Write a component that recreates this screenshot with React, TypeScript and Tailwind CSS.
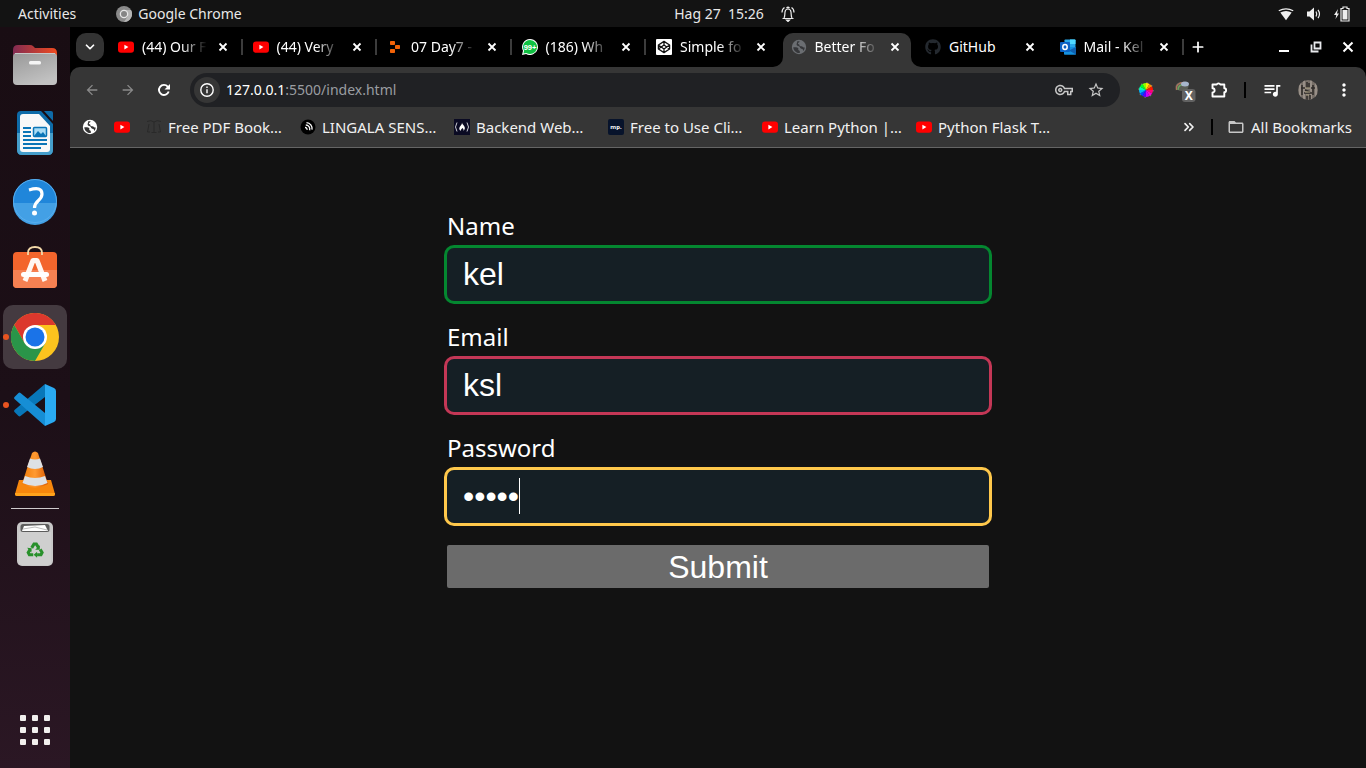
import React, { useState } from "react";
import {
  MdArrowBack,
  MdArrowForward,
  MdMoreVert,
  MdOutlineVpnKey,
  MdQueueMusic,
  MdStarOutline,
  MdFolderOpen,
} from "react-icons/md";
import { FaGithub } from "react-icons/fa";
import { ChevronDown, ChevronsRight, Plus } from "lucide-react";

function YouTube() {
  return (
    <svg viewBox="0 0 16 16" className="size-4 shrink-0" aria-hidden="true">
      <rect x="0" y="2.4" width="16" height="11.4" rx="3" fill="#f00" />
      <path d="M6.4 5.7v4.7l4-2.35z" fill="#fff" />
    </svg>
  );
}

function Cross() {
  return (
    <svg viewBox="0 0 16 16" className="size-4 shrink-0" aria-hidden="true">
      <path d="m4.500 4.500 7 7m0-7-7 7" fill="none" stroke="#fff" strokeWidth="1.800" />
    </svg>
  );
}

function Globe({ color, land }: { color: string; land: string }) {
  return (
    <svg viewBox="0 0 16 16" className="size-4 shrink-0" aria-hidden="true">
      <circle cx="8" cy="8" r="7.2" fill={color} />
      <path
        d="M2.3 8.2c2 .1 3.700-.1 4.800.9.700.8-.1 1.300.2 1.900.4.700 1.400.3 1.500 1.200v1.800c-1.600.3-3.900-.5-5-2-.900-1.200-1.500-2.500-1.500-3.800zM8.600 2.200c-.1 1.300-1.500 1.100-1.700 2.200-.1.900 1.600.6 1.500 1.600-.1 1.100 1 1.300 2.100 1.300 1 0 1.300 1.100 2.300 1.200h1c-.1 1.300-.6 2.500-1.500 3.400-.5-.5-.1-1.700-1.100-1.900-1.300-.2-2.300-.7-2.400-1.900C8.700 6.900 6.200 7 5.700 5.900 5.200 4.700 6.700 3.500 6 2.500c.8-.3 1.700-.4 2.600-.3z"
        fill={land}
      />
    </svg>
  );
}

function Replit() {
  return (
    <svg viewBox="0 0 16 16" className="size-4 shrink-0" aria-hidden="true">
      <g fill="#f26207">
        <rect x="3" y="2" width="5" height="4" rx="0.8" />
        <rect x="8" y="6" width="5" height="4" rx="0.8" />
        <rect x="3" y="10" width="5" height="4" rx="0.8" />
      </g>
    </svg>
  );
}

function WhatsApp() {
  return (
    <svg viewBox="0 0 16 16" className="size-4 shrink-0" aria-hidden="true">
      <path d="M8 0a8 8 0 1 1-3.900 15L0 16l1-4.200A8 8 0 0 1 8 0z" fill="#fff" />
      <path d="M8 1a7 7 0 1 1-3.700 12.900L1.400 14.600l.7-2.900A7 7 0 0 1 8 1z" fill="#10c143" />
      <text x="8" y="10.700" textAnchor="middle" fontSize="7.500" fontWeight="700" fontFamily="Liberation Sans, sans-serif" fill="#fff">
        99+
      </text>
    </svg>
  );
}

function CodePen() {
  return (
    <svg viewBox="0 0 16 16" className="size-4 shrink-0" aria-hidden="true">
      <rect width="16" height="16" rx="1" fill="#fff" />
      <path
        d="M8 2.400 13.600 6v4L8 13.600 2.400 10V6zM8 2.400V6M8 10v3.600M2.400 6 8 10l5.600-4M2.400 10 8 6l5.600 4"
        fill="none"
        stroke="#111"
        strokeWidth="1.300"
        strokeLinejoin="round"
      />
    </svg>
  );
}

function Outlook() {
  return (
    <svg viewBox="0 0 16 16" className="size-4 shrink-0" aria-hidden="true">
      <rect x="4.500" y="0.500" width="11" height="9" rx="0.800" fill="#28a8ea" />
      <path d="M10 .5h4.700q.8 0 .8.8V5H10z" fill="#50d9ff" />
      <path d="M4.500 5H10v5H4.500z" fill="#0364b8" />
      <path d="M4 8l12 0v7q0 .8-.8.8H4.800q-.8 0-.8-.8z" fill="#1490df" />
      <path d="M16 8v7.500L9 11.500z" fill="#0f5fae" />
      <rect x="0" y="3" width="10" height="10" rx="0.900" fill="#0a62c4" />
      <ellipse cx="5" cy="8" rx="2.200" ry="2.500" fill="none" stroke="#fff" strokeWidth="1.500" />
    </svg>
  );
}

type Tab = { title: string; icon: React.ReactNode; active?: boolean; divider?: boolean };

const tabs: Tab[] = [
  { title: "(44) Our F", icon: <YouTube />, divider: true },
  { title: "(44) Very", icon: <YouTube />, divider: true },
  { title: "07 Day7 -", icon: <Replit />, divider: true },
  { title: "(186) Wh", icon: <WhatsApp />, divider: true },
  { title: "Simple fo", icon: <CodePen /> },
  { title: "Better Fo", icon: <Globe color="#6b6e72" land="#36373a" />, active: true },
  { title: "GitHub", icon: <FaGithub className="size-4 shrink-0 text-[#24292f]" aria-hidden="true" /> },
  { title: "Mail - Kel", icon: <Outlook />, divider: true },
];

function TabFoot({ side }: { side: "left" | "right" }) {
  return (
    <svg
      viewBox="0 0 10 10"
      aria-hidden="true"
      className={side === "left" ? "absolute bottom-0 -left-2.5 size-2.5" : "absolute bottom-0 -right-2.5 size-2.5"}
    >
      <path d={side === "left" ? "M10 0v10H0A10 10 0 0 0 10 0z" : "M0 0v10h10A10 10 0 0 1 0 0z"} fill="#363636" />
    </svg>
  );
}

function TabStrip() {
  return (
    <div className="flex h-10 items-start bg-black pt-1.5 pl-1.5 text-white">
      <button aria-label="Search tabs" className="flex size-7 shrink-0 items-center justify-center rounded-[10px] bg-[#333]">
        <ChevronDown className="size-3.5" strokeWidth={3} />
      </button>
      <div role="tablist" className="ml-1.5 flex max-w-[1076px] flex-1 self-stretch">
        {tabs.map((tab, i) => (
          <div key={i} className="flex min-w-0 flex-1 items-start">
            <div
              className={
                tab.active
                  ? "relative flex h-full min-w-0 flex-1 items-start rounded-t-[10px] bg-[#363636] px-2"
                  : "relative flex h-full min-w-0 flex-1 items-start px-2"
              }
            >
              {tab.active && <TabFoot side="left" />}
              {tab.active && <TabFoot side="right" />}
              <button role="tab" aria-selected={!!tab.active} className="flex h-7 min-w-0 flex-1 items-center gap-2">
                {tab.icon}
                <span
                  className={
                    tab.title === "GitHub"
                      ? "min-w-0 flex-1 text-left text-sm whitespace-nowrap"
                      : "min-w-0 flex-1 text-left text-sm whitespace-nowrap [mask-image:linear-gradient(to_right,black_60%,transparent)]"
                  }
                >
                  {tab.title}
                </span>
              </button>
              <button aria-label={"Close " + tab.title} className="ml-2 flex h-7 w-4 shrink-0 items-center justify-center">
                <Cross />
              </button>
            </div>
            <span className="flex h-7 w-1.5 shrink-0 items-center justify-center">
              {tab.divider && <span className="h-4 w-0.5 bg-[#3c3c3c]" />}
            </span>
          </div>
        ))}
      </div>
      <button aria-label="New tab" className="flex h-7 w-6 shrink-0 items-center justify-center">
        <Plus className="size-4" strokeWidth={2.600} />
      </button>
      <div className="ml-auto flex h-7 shrink-0 items-center gap-4 pr-2.5">
        <button aria-label="Minimize">
          <svg viewBox="0 0 16 16" className="size-4"><path d="M3 11h10v2H3z" fill="#fff" /></svg>
        </button>
        <button aria-label="Restore">
          <svg viewBox="0 0 16 16" className="size-4">
            <path d="M6.500 3.500h6v6h-6zM3.500 5.500v7h7" fill="none" stroke="#e8eaed" strokeWidth="1.800" />
            <path d="M8.500 5.500h2v2h-2z" fill="#111" />
          </svg>
        </button>
        <button aria-label="Close window">
          <svg viewBox="0 0 16 16" className="size-4">
            <path d="m3.500 3.500 9 9m0-9-9 9" fill="none" stroke="#fff" strokeWidth="2" />
          </svg>
        </button>
      </div>
    </div>
  );
}

function ColorWheel() {
  return (
    <svg viewBox="0 0 16 16" className="size-4" aria-hidden="true">
      <circle cx="8" cy="8" r="7" fill="none" stroke="#777" strokeWidth="1.500" strokeDasharray="1.500 4" />
      <path d="M8 8 8 1a7 7 0 0 1 3.500.94z" fill="#ffe600" />
      <path d="M8 8 11.500 1.940A7 7 0 0 1 14.060 4.500z" fill="#ff8a00" />
      <path d="M8 8 14.060 4.500A7 7 0 0 1 15 8z" fill="#ff1500" />
      <path d="M8 8h7a7 7 0 0 1-.94 3.500z" fill="#ff0078" />
      <path d="M8 8l6.060 3.500a7 7 0 0 1-2.560 2.560z" fill="#ff00d4" />
      <path d="M8 8l3.500 6.060A7 7 0 0 1 8 15z" fill="#c800ff" />
      <path d="M8 8v7a7 7 0 0 1-3.500-.94z" fill="#5a00ff" />
      <path d="M8 8l-3.500 6.060a7 7 0 0 1-2.560-2.560z" fill="#0048ff" />
      <path d="M8 8l-6.060 3.500A7 7 0 0 1 1 8z" fill="#00b7ff" />
      <path d="M8 8H1a7 7 0 0 1 .94-3.500z" fill="#00ffb0" />
      <path d="M8 8 1.940 4.500A7 7 0 0 1 4.500 1.940z" fill="#00ff28" />
      <path d="M8 8 4.500 1.940A7 7 0 0 1 8 1z" fill="#8dff00" />
    </svg>
  );
}

function Toolbar() {
  return (
    <div className="flex h-[46px] items-center pr-3 pl-3.5">
      <div className="flex shrink-0 gap-5 pr-[18px]">
        <button aria-label="Back" className="text-[#8a8a8a]"><MdArrowBack className="size-4" /></button>
        <button aria-label="Forward" className="text-[#8a8a8a]"><MdArrowForward className="size-4" /></button>
        <button aria-label="Reload">
          <svg viewBox="0 0 16 16" className="size-4">
            <path d="M12.700 9.500A5 5 0 1 1 11.700 4.600L13 6" fill="none" stroke="#fff" strokeWidth="1.900" />
            <path d="M14 2v5.500H8.500z" fill="#fff" />
          </svg>
        </button>
      </div>
      <div className="flex h-[34px] min-w-0 flex-1 items-center rounded-full bg-[#202124] pr-[15px] pl-1">
        <button aria-label="Site information" className="flex size-6.5 shrink-0 items-center justify-center rounded-full bg-[#363636]">
          <svg viewBox="0 0 16 16" className="size-4">
            <circle cx="8" cy="8" r="6.200" fill="none" stroke="#fff" strokeWidth="1.400" />
            <path d="M7.300 7.200h1.400v4H7.300zM7.300 4.500h1.400V6H7.300z" fill="#fff" />
          </svg>
        </button>
        <a href="#" className="ml-1.5 min-w-0 flex-1 truncate text-sm text-[#9a9da1]">
          <span className="text-white">127.0.0.1</span>:5500/index.html
        </a>
        <button aria-label="Manage passwords" className="text-[#c7c7c7]"><MdOutlineVpnKey className="size-[18px]" /></button>
        <button aria-label="Bookmark this page" className="ml-3.5 text-[#c7c7c7]"><MdStarOutline className="size-[18px]" /></button>
      </div>
      <div className="ml-[18px] flex shrink-0 items-center text-white">
        <button aria-label="Color picker" className="flex"><ColorWheel /></button>
        <button aria-label="Blocked extension" className="ml-5 flex">
          <svg viewBox="0 0 24 24" className="size-6">
            <ellipse cx="8" cy="8.500" rx="6.500" ry="4.500" fill="#5a5d55" />
            <path d="M2.500 12C1.500 7 5 4.500 10 4.500" fill="none" stroke="#ad735e" strokeWidth="1.300" />
            <path d="M4 12c0-4 3-5.500 6-5.500" fill="none" stroke="#6ca55c" strokeWidth="1.300" />
            <ellipse cx="11" cy="6" rx="4" ry="2.500" fill="#a7b5cb" />
            <rect x="8" y="11" width="13.500" height="13" rx="3" fill="#626262" />
            <text x="14.800" y="22" textAnchor="middle" fontSize="12" fontWeight="700" fontFamily="Noto Sans, sans-serif" fill="#fff">X</text>
          </svg>
        </button>
        <button aria-label="Extensions" className="ml-3 flex">
          <svg viewBox="0 0 18 18" className="size-[18px]">
            <path d="M2.500 3.500h4.200a1.900 1.600 0 0 1 3.600 0h4v3.800a1.800 1.900 0 0 1 0 3.800v4.400H2.500v-4a2 2 0 0 0 0-4.200z" fill="none" stroke="#fff" strokeWidth="1.900" strokeLinejoin="round" />
          </svg>
        </button>
        <span className="ml-4 h-4 w-0.5 bg-black" />
        <button aria-label="Media controls" className="ml-4 flex"><MdQueueMusic className="size-5" /></button>
        <button aria-label="Profile" className="ml-4 flex">
          <svg viewBox="0 0 20 20" className="size-5">
            <defs><clipPath id="avatar"><circle cx="10" cy="10" r="10" /></clipPath></defs>
            <g clipPath="url(#avatar)">
              <rect width="20" height="20" fill="#776f68" />
              <path d="M2 0v20M6 0v20M13 0v20M18 0v20" stroke="#aaa098" strokeWidth="1.300" />
              <path d="M4 5v10M9 2v6M11 3v5M15 5v10M7 10l5 2M6 13h8M9 15v5M12 15v5M3 8h4M13 8h4" stroke="#302d2a" strokeWidth="1.600" />
              <path d="M7 8h5M7 12h5M8 15h3" stroke="#b4a98b" />
            </g>
          </svg>
        </button>
        <button aria-label="Menu" className="ml-4 flex"><MdMoreVert className="size-5" /></button>
      </div>
    </div>
  );
}

const bookmarks: { title: string; icon: React.ReactNode }[] = [
  {
    title: "Free PDF Book…",
    icon: (
      <svg viewBox="0 0 16 16" className="size-4 shrink-0" aria-hidden="true">
        <path d="M1 2.500Q5 .5 8 3q3-2.500 7-.5M8 3v10M5.500 13.500h5M3 5l-1.500 8H4M13 5l1.500 8H12" fill="none" stroke="#292929" />
      </svg>
    ),
  },
  {
    title: "LINGALA SENS…",
    icon: (
      <svg viewBox="0 0 16 16" className="size-4 shrink-0" aria-hidden="true">
        <circle cx="8" cy="8" r="7.500" fill="#000" />
        <path d="M6.500 3.600a6 6 0 0 1 5.500 7M5.800 6a4 4 0 0 1 3.800 5.200M5 8.500a2 2 0 0 1 2 2.300" fill="none" stroke="#fff" strokeWidth="1.300" />
      </svg>
    ),
  },
  {
    title: "Backend Web…",
    icon: (
      <svg viewBox="0 0 16 16" className="size-4 shrink-0" aria-hidden="true">
        <rect width="16" height="16" fill="#0a0a23" />
        <path d="M3 3.500q-3 4.500 0 9M13 3.500q3 4.500 0 9" fill="none" stroke="#c9c9d2" />
        <path d="M8 3.500c.4 2.600 3.400 3.400 2.800 6.200-.3 1-.8 1.500-1.500 2 .6-1.600-.2-2.200-1-2.800-.5 1.200-1.700 1.300-1.300 2.900-1.700-.7-2.200-2.200-1.300-3.900C6.500 6.500 8.100 5.600 8 3.500z" fill="#fff" />
      </svg>
    ),
  },
  {
    title: "Free to Use Cli…",
    icon: (
      <svg viewBox="0 0 16 16" className="size-4 shrink-0" aria-hidden="true">
        <rect width="16" height="16" rx="2" fill="#07132b" />
        <text x="8" y="9.500" textAnchor="middle" fontSize="6" fontWeight="700" fontFamily="Noto Sans, sans-serif" fill="#fff">mp.</text>
      </svg>
    ),
  },
  { title: "Learn Python |…", icon: <YouTube /> },
  { title: "Python Flask T…", icon: <YouTube /> },
];

function BookmarkBar() {
  return (
    <nav aria-label="Bookmarks" className="flex h-[35px] items-center border-b border-[#656565] pr-3.5 pb-1.5 pl-3 text-[15px] text-[#f1f1f1]">
      <a href="#" aria-label="Globe" className="mr-4"><Globe color="#fff" land="#363636" /></a>
      <a href="#" aria-label="YouTube" className="mr-4"><YouTube /></a>
      {bookmarks.map((b) => (
        <a key={b.title} href="#" className="flex w-[154px] shrink-0 items-center gap-1.5 whitespace-nowrap">
          {b.icon}
          {b.title}
        </a>
      ))}
      <div className="ml-auto flex items-center">
        <button aria-label="More bookmarks"><ChevronsRight className="size-4" strokeWidth={2.500} /></button>
        <span className="mx-3.5 h-4 w-0.5 bg-black" />
        <button className="flex items-center gap-1.5 whitespace-nowrap">
          <MdFolderOpen className="size-[18px] text-[#c7c7c7]" />
          All Bookmarks
        </button>
      </div>
    </nav>
  );
}

function FilesIcon() {
  return (
    <svg viewBox="0 0 48 48" className="size-12">
      <defs>
        <linearGradient id="folder" x1="0" x2="1"><stop stopColor="#822b52" /><stop offset="1" stopColor="#f04b20" /></linearGradient>
        <linearGradient id="front" x1="0" y1="0" x2="0.500" y2="1"><stop stopColor="#989898" /><stop offset="1" stopColor="#c1c1c1" /></linearGradient>
      </defs>
      <path d="M2 9q0-5 5-5h12q2 0 3 1l2 2h17q5 0 5 5v10H2z" fill="url(#folder)" />
      <rect x="2" y="12" width="44" height="32" rx="4" fill="url(#front)" />
      <path d="M4 12.500h40" stroke="#c8c8c8" />
      <rect x="18" y="20" width="12" height="3.500" rx="1.500" fill="#f5f5f5" />
    </svg>
  );
}

function WriterIcon() {
  return (
    <svg viewBox="0 0 48 48" className="size-12">
      <path d="M10 2h20l12 13v26q0 5-5 5H11q-5 0-5-5V6q0-4 4-4z" fill="#0e6ba8" />
      <path d="M6 24h36v17q0 5-5 5H11q-5 0-5-5z" fill="#459ecb" />
      <path d="M33 2h7q2 0 2 2v8z" fill="#0e6ba8" />
      <path d="M12 5h16l11 12v23q0 3-3 3H12q-3 0-3-3V8q0-3 3-3z" fill="#f8f8f8" />
      <path d="M12 19h8M12 23h8M12 27h8M12 31h24M12 35h24M12 39h18" stroke="#0b75b7" strokeWidth="2" />
      <rect x="22.500" y="18.500" width="13" height="9" rx="1" fill="#a9dcf5" stroke="#0b75b7" strokeWidth="1.500" />
      <path d="m23 27 4-5 3 3 2-2 3 4z" fill="#0b75b7" />
    </svg>
  );
}

function HelpIcon() {
  return (
    <svg viewBox="0 0 48 48" className="size-12">
      <circle cx="24" cy="24" r="22" fill="#2086da" />
      <path d="M2 26a22 22 0 0 0 44 0z" fill="#43a0e5" />
      <circle cx="24" cy="24" r="21.500" fill="none" stroke="#57aded" />
      <path d="M18 13q13-4 13 4c0 7-7.500 6-7.500 14" fill="none" stroke="#fff" strokeWidth="3.200" />
      <circle cx="23.500" cy="36" r="2.500" fill="#fff" />
    </svg>
  );
}

function SoftwareIcon() {
  return (
    <svg viewBox="0 0 48 48" className="size-12">
      <rect x="2" y="7" width="44" height="36" rx="4" fill="#f3652c" />
      <path d="M2 25h44v14q0 4-4 4H6q-4 0-4-4z" fill="#f68152" />
      <path d="M17 10V8q0-6 7-6t7 6v2" fill="none" stroke="#f3d9a9" strokeWidth="1.800" />
      <path d="m14 36 8-20.500h4L34 36" fill="none" stroke="#fff7f1" strokeWidth="5" strokeLinejoin="round" />
      <rect x="10" y="27" width="28" height="5" rx="2.500" fill="#fff" />
    </svg>
  );
}

function ChromeIcon() {
  return (
    <svg viewBox="0 0 48 48" className="size-12">
      <circle cx="24" cy="24" r="24" fill="#fcc31e" />
      <path d="M24 12h20.800A24 24 0 0 0 3.200 12L13.600 30z" fill="#dc382d" />
      <path d="M3.200 12A24 24 0 0 0 24 48l10.400-18-10.400 6-10.400-6z" fill="#2a9549" />
      <circle cx="24" cy="24" r="12" fill="#fff" />
      <circle cx="24" cy="24" r="9.500" fill="#1a73e8" />
    </svg>
  );
}

function CodeIcon() {
  return (
    <svg viewBox="0 0 48 48" className="size-12">
      <path d="M34 3 3.500 29q-1 1 0 2l4 4q1 .8 2 0L34 16z" fill="#0877b9" />
      <path d="M34 45 3.500 18q-1-1 0-2l4-4q1-.8 2 0L34 32z" fill="#168ed5" />
      <path d="M34 3 43 7q2 1 2 3v28q0 2-2 3l-9 4z" fill="#2aaaf2" />
    </svg>
  );
}

function VlcIcon() {
  return (
    <svg viewBox="0 0 48 48" className="size-12">
      <defs><linearGradient id="cone"><stop stopColor="#f07b05" /><stop offset="0.500" stopColor="#ff9a31" /><stop offset="1" stopColor="#d85800" /></linearGradient></defs>
      <path d="M8 31h32l4 14q.3 2-2 2H6q-2 0-2-2z" fill="#f7870c" />
      <path d="M4 44h40v1q0 2-2 2H6q-2 0-2-2z" fill="#ffa21b" />
      <path d="M21 4q3-3 6 0l10 31q-13 7-26 0z" fill="url(#cone)" />
      <path d="m19 9.500q5 2 10 0l3 8.500q-8 4-16 0zM14 27q10 4 20 0l2.500 7q-12 6-25 0z" fill="#dde1e4" />
    </svg>
  );
}

function TrashIcon() {
  return (
    <svg viewBox="0 0 48 48" className="size-12">
      <rect x="6" y="2" width="36" height="44" rx="5" fill="#c8c8c8" />
      <rect x="9.500" y="4" width="29" height="8" rx="2.500" fill="#5c5c5c" />
      <path d="m11 11 2-5 21-1 3 6z" fill="#fff" />
      <path d="m12 9 12-2 12 3" fill="none" stroke="#bbb" />
      <path d="M8 12h32v30q0 3-3 3H11q-3 0-3-3z" fill="#cfcfcf" />
      <g transform="translate(5.300 6.300) scale(0.770)">
        <path d="m20 28 3-5h3l3 5M31 30l2.500 4-1.500 3h-5M22 37h-5l-1.500-3 2.500-4" fill="none" stroke="#28902b" strokeWidth="4" />
        <path d="m30.500 24.500v6h-6zM27 33v8l-4.500-4zM14 28l6 .5-.5 5.500z" fill="#28902b" />
      </g>
    </svg>
  );
}

const apps = [
  { name: "Files", icon: <FilesIcon /> },
  { name: "LibreOffice Writer", icon: <WriterIcon /> },
  { name: "Help", icon: <HelpIcon /> },
  { name: "Ubuntu Software", icon: <SoftwareIcon /> },
  { name: "Google Chrome", icon: <ChromeIcon />, running: true, focused: true },
  { name: "Visual Studio Code", icon: <CodeIcon />, running: true },
  { name: "VLC media player", icon: <VlcIcon /> },
];

function Dock() {
  return (
    <aside aria-label="Dock" className="flex w-[70px] shrink-0 flex-col items-center bg-linear-to-b from-[#190d13] via-[#1c0f17] to-[#2b1724] py-1.5">
      <div className="flex flex-col gap-1">
        {apps.map((app) => (
          <button
            key={app.name}
            aria-label={app.name}
            className={
              app.focused
                ? "relative flex size-16 items-center justify-center rounded-[10px] bg-[#443a40]"
                : "relative flex size-16 items-center justify-center"
            }
          >
            {app.running && <span className="absolute top-[29px] left-0 size-1.5 rounded-full bg-[#e95420]" />}
            {app.icon}
          </button>
        ))}
      </div>
      <span className="my-[3px] h-px w-12 bg-[#cfcbcd]" />
      <button aria-label="Trash" className="flex size-16 items-center justify-center"><TrashIcon /></button>
      <button aria-label="Show applications" className="mt-auto flex size-16 items-center justify-center">
        <span className="grid grid-cols-3 gap-1.5">
          {Array.from({ length: 9 }, (_, i) => (
            <span key={i} className="size-1.5 rounded-[1px] bg-[#f2f0ee]" />
          ))}
        </span>
      </button>
    </aside>
  );
}

function TopBar() {
  return (
    <header className="grid h-[27px] shrink-0 grid-cols-[1fr_auto_1fr] items-center bg-[#131313] text-sm text-[#e8e8e8]">
      <div className="flex items-center pl-[18px]">
        <button>Activities</button>
        <button className="ml-10 flex items-center gap-1.5">
          <svg viewBox="0 0 16 16" className="size-4" aria-hidden="true">
            <circle cx="8" cy="8" r="8" fill="#8a8a8a" />
            <path d="M8 4h7A8 8 0 0 1 8 16l4-6z" fill="#b5b5b5" />
            <circle cx="8" cy="8" r="4.300" fill="#e6e6e6" />
            <circle cx="8" cy="8" r="3" fill="#858585" />
          </svg>
          Google Chrome
        </button>
      </div>
      <button className="ml-[104px] flex items-center gap-4">
        <span className="whitespace-pre">Hag 27  15:26</span>
        <svg viewBox="0 0 16 16" className="size-4" fill="none" stroke="#ececec" strokeWidth="1.200">
          <path d="M2.500 12.500h11M4 12c1-1.500.7-3.500 1-6 .3-2.300 1.300-3 3-3s2.700.7 3 3c.3 2.500 0 4.500 1 6M2 6.500Q2 3 4.500 1.500M14 6.500Q14 3 11.500 1.500M6.500 2Q8 .5 9.500 2" />
          <path d="M6.500 14h3l-1.500 1.500z" fill="#ececec" />
        </svg>
      </button>
      <div className="flex items-center justify-end gap-3 pr-4">
        <svg viewBox="0 0 16 16" className="size-4" aria-label="Wi-Fi">
          <path d="M.8 4.800Q8 .8 15.200 4.800" fill="none" stroke="#eee" strokeWidth="1.300" />
          <path d="M2.300 6.500Q8 3.500 13.700 6.500L8 14.200z" fill="#eee" />
        </svg>
        <svg viewBox="0 0 16 16" className="size-4" aria-label="Volume">
          <path d="M1 5.500h2.500L8 1.500v13l-4.500-4H1z" fill="#eee" />
          <path d="M10 5.500q1.500 2.500 0 5M12 3.800q3 4.200 0 8.400" fill="none" stroke="#eee" strokeWidth="1.200" />
        </svg>
        <svg viewBox="0 0 16 16" className="size-4" aria-label="Battery charging">
          <path d="M4 3 0 9h2.300L1.500 13 5 7.500H3z" fill="#eee" />
          <path d="M7 2.500h2V1h4v1.500h2V15H7z" fill="none" stroke="#eee" strokeWidth="1.200" />
          <path d="M8.500 4h5v9.500h-5z" fill="#eee" />
        </svg>
      </div>
    </header>
  );
}

function Field(props: {
  id: string;
  label: string;
  type: string;
  ring: string;
  initial: string;
  caret?: boolean;
}) {
  const [value, setValue] = useState(props.initial);
  return (
    <div className="flex flex-col gap-1.5">
      <label htmlFor={props.id} className="text-2xl">{props.label}</label>
      <div className="relative flex">
        <input
          id={props.id}
          type={props.type}
          value={value}
          autoComplete="off"
          onChange={(e) => setValue(e.target.value)}
          className={
            "h-[53px] w-full rounded-[7px] bg-[#151f25] px-4 font-['Liberation_Sans',sans-serif] text-[32px] leading-9 text-white ring-3 outline-none " +
            props.ring
          }
        />
        {props.caret && <span aria-hidden="true" className="absolute top-2 left-[72px] h-9 w-px bg-white" />}
      </div>
    </div>
  );
}

export default function App() {
  return (
    <div className="flex min-h-screen flex-col bg-[#121212] font-['Noto_Sans',sans-serif]">
      <TopBar />
      <div className="flex flex-1">
        <Dock />
        <div className="flex min-w-0 flex-1 flex-col bg-black">
          <TabStrip />
          <div className="rounded-t-[10px] bg-[#363636]">
            <Toolbar />
            <BookmarkBar />
          </div>
          <main className="flex-1 bg-[#121212] px-6 pt-[62px] text-white">
            <form onSubmit={(e) => e.preventDefault()} className="mx-auto flex max-w-[542px] flex-col gap-5">
              <Field id="name" label="Name" type="text" initial="kel" ring="ring-[#048730]" />
              <Field id="email" label="Email" type="text" initial="ksl" ring="ring-[#c43756]" />
              <Field id="password" label="Password" type="password" initial="abcde" ring="ring-[#ffc84b]" caret />
              <button
                type="submit"
                className="mt-0.5 h-[43px] rounded-[2px] bg-[#6b6b6b] font-['Liberation_Sans',sans-serif] text-[32px] leading-9 text-white"
              >
                Submit
              </button>
            </form>
          </main>
        </div>
      </div>
    </div>
  );
}
